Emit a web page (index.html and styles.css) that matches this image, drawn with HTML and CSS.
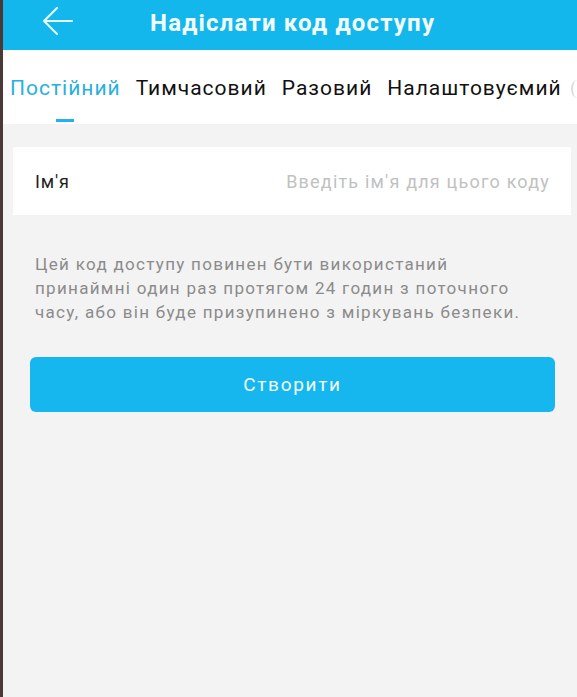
FILE: index.html
```html
<!DOCTYPE html>
<html lang="uk">
<head>
<meta charset="utf-8">
<title>Надіслати код доступу</title>
<link rel="stylesheet" href="styles.css">
</head>
<body>
<div class="app">
  <header class="topbar">
    <span class="back">
      <svg width="34" height="30" viewBox="0 0 34 30" aria-hidden="true">
        <path d="M3 14 H31 M3 14 L16 1 M3 14 L16 27" fill="none" stroke="#e8fbff" stroke-width="2" stroke-linecap="round" stroke-linejoin="round"/>
      </svg>
    </span>
    <h1 class="title">Надіслати код доступу</h1>
  </header>
  <nav class="tabs">
    <div class="tab active">Постійний</div>
    <div class="tab">Тимчасовий</div>
    <div class="tab">Разовий</div>
    <div class="tab">Налаштовуємий</div>
    <span class="tab-more" aria-hidden="true"></span>
  </nav>
  <main class="content">
    <div class="field">
      <span class="label">Ім'я</span>
      <span class="placeholder">Введіть ім'я для цього коду</span>
    </div>
    <p class="note">Цей код доступу повинен бути використаний принаймні один раз протягом 24 годин з поточного часу, або він буде призупинено з міркувань безпеки.</p>
    <button class="create">Створити</button>
  </main>
</div>
</body>
</html>
```
FILE: styles.css
```css
html, body {
  margin: 0;
  padding: 0;
  background: #f3f3f3;
}
body {
  font-family: Roboto, "Noto Sans", "DejaVu Sans", sans-serif;
}
.app {
  border-left: 3px solid #4a3935;
  min-height: 697px;
  box-sizing: border-box;
  overflow: hidden;
}
.topbar {
  height: 50px;
  background: #14b7ec;
  display: flex;
  align-items: center;
}
.back {
  width: 34px;
  height: 30px;
  margin-left: 38px;
  margin-top: -6px;
  display: flex;
}
.title {
  margin: -5px 0 0 75px;
  font-size: 24px;
  font-weight: 700;
  color: #f2fcff;
  letter-spacing: 1.2px;
}
.tabs {
  height: 74px;
  background: #fff;
  display: flex;
  gap: 15px;
  padding-left: 7px;
  white-space: nowrap;
  overflow: hidden;
}
.tab {
  position: relative;
  font-size: 21px;
  color: #111;
  padding-top: 26px;
  line-height: 24px;
  letter-spacing: 1px;
  flex: none;
}
.tab.active {
  color: #28afe0;
}
.tab.active::after {
  content: "";
  position: absolute;
  left: 50%;
  margin-left: -9px;
  top: 69px;
  width: 18px;
  height: 3px;
  background: #22b4e8;
}
.tab-more {
  flex: none;
  width: 10px;
  height: 18px;
  margin-top: 30px;
  margin-left: -6px;
  border-left: 2px solid #dcdcdc;
  border-radius: 50% 0 0 50%;
}
.content {
  padding: 23px 6px 0 10px;
}
.field {
  height: 68px;
  background: #fff;
  display: flex;
  align-items: center;
  justify-content: space-between;
  padding: 0 21px 0 22px;
}
.label {
  font-size: 18px;
  color: #1e1e1e;
  letter-spacing: 0.9px;
}
.placeholder {
  font-size: 18px;
  color: #c1c1c1;
  letter-spacing: 1.2px;
}
.note {
  margin: 37px 47px 0 22px;
  font-size: 17px;
  line-height: 24px;
  color: #8b8b8b;
  letter-spacing: 1.3px;
}
.create {
  display: block;
  margin: 33px 16px 0 17px;
  width: calc(100% - 33px);
  height: 55px;
  border: none;
  border-radius: 6px;
  background: #15b7ee;
  color: #f4fdff;
  font-family: Roboto, "Noto Sans", sans-serif;
  font-size: 19px;
  letter-spacing: 1.7px;
  cursor: pointer;
}
```
